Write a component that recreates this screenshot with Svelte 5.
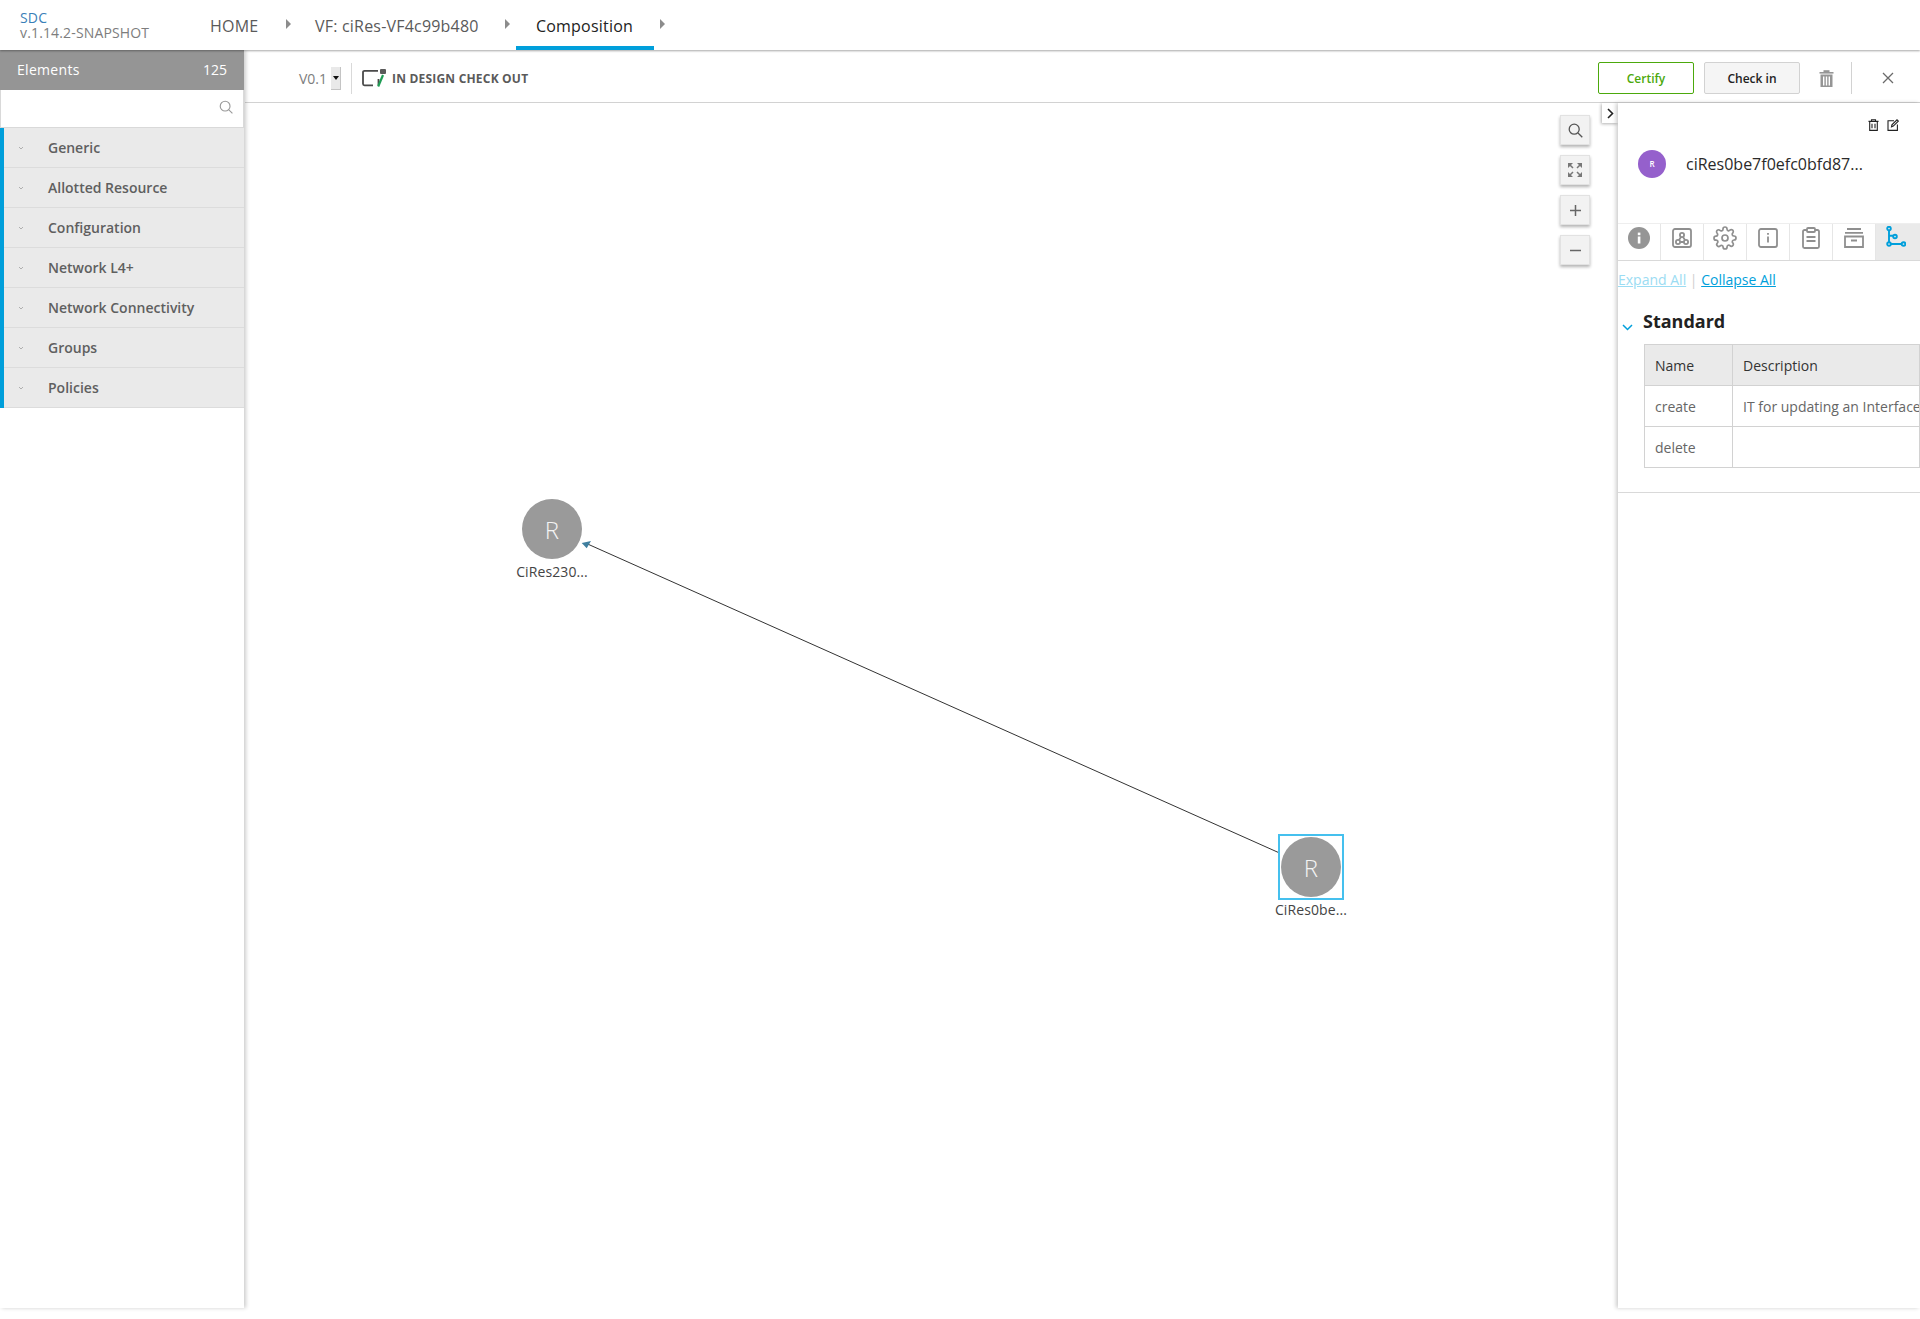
<script>
  const navItems = [
    { label: 'HOME' },
    { label: 'VF: ciRes-VF4c99b480' },
    { label: 'Composition', active: true }
  ];
  const groups = ['Generic', 'Allotted Resource', 'Configuration', 'Network L4+', 'Network Connectivity', 'Groups', 'Policies'];
  const nodes = [
    { id: 'a', label: 'CiRes230...', x: 522, y: 499 },
    { id: 'b', label: 'CiRes0be...', x: 1281, y: 837, selected: true }
  ];
</script>

<div class="page">
  <header class="topbar">
    <div class="brand">
      <div class="brand-name">SDC</div>
      <div class="brand-version">v.1.14.2-SNAPSHOT</div>
    </div>
    <nav class="nav">
      {#each navItems as item}
        <div class="nav-item" class:active={item.active}>
          <span>{item.label}</span>
          <i class="nav-arrow"></i>
        </div>
      {/each}
    </nav>
  </header>

  <div class="body">
    <aside class="sidebar">
      <div class="side-head"><span class="side-title">Elements</span><span>125</span></div>
      <div class="side-search">
        <svg width="14" height="14" viewBox="0 0 16 16" fill="none" stroke="#9a9a9a" stroke-width="1.3">
          <circle cx="7" cy="7" r="5.6"></circle>
          <path d="M11 11l4.300 4.300"></path>
        </svg>
      </div>
      <ul class="groups">
        {#each groups as g}
          <li>
            <svg width="6" height="4" viewBox="0 0 6 4" fill="none" stroke="#a0a0a0" stroke-width="0.8"><path d="M1 1l2 2 2-2"></path></svg>
            <span>{g}</span>
          </li>
        {/each}
      </ul>
    </aside>

    <main class="main">
      <div class="toolbar">
        <div class="version">
          <span>V0.1</span>
          <span class="version-select"><i></i></span>
        </div>
        <div class="status">
          <svg width="24" height="18" viewBox="0 0 24 18" fill="none">
            <path d="M16 1.800H2.500a1.500 1.500 0 0 0-1.500 1.500v11.500a1.500 1.500 0 0 0 1.500 1.500H11M16.500 10v6.300" stroke="#4a4a4a" stroke-width="1.800"></path>
            <rect x="18" y="0" width="6" height="5" rx="1" fill="#5a5a5a"></rect>
            <path d="M21 6l-4.800 11.500" stroke="#1f9d55" stroke-width="2.200"></path>
          </svg>
          <span>IN DESIGN CHECK OUT</span>
        </div>
        <div class="actions">
          <button class="btn certify">Certify</button>
          <button class="btn checkin">Check in</button>
          <svg class="trash" width="15" height="17" viewBox="0 0 15 17" fill="#959595">
            <rect x="0.5" y="2" width="14" height="1.6"></rect>
            <rect x="4.500" y="0.2" width="6" height="1.8"></rect>
            <path d="M1.500 4.600h12V17h-12zM4 6.500V15.500h1.400V6.500zM6.800 6.500V15.500h1.400V6.500zM9.600 6.500V15.500H11V6.500z" fill-rule="evenodd"></path>
          </svg>
          <span class="act-divider"></span>
          <svg class="close" width="12" height="12" viewBox="0 0 12 12" stroke="#6a6a6a" stroke-width="1.3"><path d="M1 1l10 10M11 1L1 11"></path></svg>
        </div>
      </div>

      <div class="work">
        <div class="canvas">
          <svg class="edges" width="1920" height="1319" viewBox="0 0 1920 1319">
            <line x1="1278" y1="852.300" x2="588" y2="544.200" stroke="#333" stroke-width="1"></line>
            <path d="M581.700 543L591 541L586.700 548.300z" fill="#3f7f9f"></path>
          </svg>
          {#each nodes as n}
            <div class="node" class:selected={n.selected} style="left:{n.x - 244}px;top:{n.y - 103}px">
              <div class="node-circle">R</div>
              <div class="node-label">{n.label}</div>
            </div>
          {/each}
          <div class="zoom-tools">
            <button aria-label="Search">
              <svg width="15" height="15" viewBox="0 0 15 15" fill="none" stroke="#555" stroke-width="1.300"><circle cx="6.200" cy="6.200" r="5"></circle><path d="M10 10l4.300 4.300"></path></svg>
            </button>
            <button aria-label="Fit">
              <svg width="14" height="14" viewBox="0 0 14 14" fill="#777" stroke="#777">
                <path stroke="none" d="M0 0h5L0 5zM14 0v5L9 0zM0 14V9l5 5zM14 14H9l5-5z"></path>
                <path stroke-width="1.500" d="M2 2l3 3M12 2L9 5M2 12l3-3M12 12L9 9"></path>
              </svg>
            </button>
            <button aria-label="Zoom in">
              <svg width="13" height="13" viewBox="0 0 13 13" stroke="#666" stroke-width="1.500"><path d="M1 6.500h11M6.500 1v11"></path></svg>
            </button>
            <button aria-label="Zoom out">
              <svg width="13" height="13" viewBox="0 0 13 13" stroke="#666" stroke-width="1.500"><path d="M1 6.500h11"></path></svg>
            </button>
          </div>
          <button class="panel-toggle" aria-label="Collapse panel">
            <svg width="7" height="11" viewBox="0 0 7 11" fill="none" stroke="#222" stroke-width="1.600"><path d="M1 1l4.500 4.500L1 10"></path></svg>
          </button>
        </div>

        <section class="panel">
          <div class="panel-tools">
            <svg width="11" height="12" viewBox="0 0 11 12" fill="none" stroke="#222" stroke-width="1.100">
              <path d="M0.500 2.400h10M3.500 2.200V.7h4v1.500M1.700 2.600v8.800h7.600V2.600M4 4.800v4.400M7 4.800v4.400"></path>
            </svg>
            <svg width="12" height="12" viewBox="0 0 12 12" fill="none" stroke="#222" stroke-width="1.100">
              <path d="M7 1.700H1v9.700h9.400V5.500M4.500 7.800l.4-2L10 .8l1.300 1.300-5 5z"></path>
            </svg>
          </div>
          <div class="panel-title">
            <span class="avatar">R</span>
            <span class="title-text">ciRes0be7f0efc0bfd87...</span>
          </div>
          <div class="tabs">
            <div class="tab">
              <svg width="22" height="22" viewBox="0 0 22 22"><circle cx="11" cy="11" r="11" fill="#959595"></circle><rect x="9.800" y="9.500" width="2.600" height="7" fill="#fff"></rect><rect x="9.800" y="5.600" width="2.600" height="2.600" fill="#fff"></rect></svg>
            </div>
            <div class="tab">
              <svg width="20" height="20" viewBox="0 0 20 20" fill="none" stroke="#8f8f8f" stroke-width="1.800">
                <rect x="1" y="1" width="18" height="18" rx="2"></rect>
                <circle cx="10" cy="7" r="2.100"></circle><circle cx="6" cy="14" r="2.100"></circle><circle cx="14" cy="14" r="2.100"></circle>
                <path d="M9 9l-2 3M11 9l2 3M8.200 14h3.600"></path>
              </svg>
            </div>
            <div class="tab">
              <svg width="24" height="24" viewBox="0 0 24 24" fill="none" stroke="#8f8f8f" stroke-width="1.700" stroke-linejoin="round">
                <circle cx="12" cy="12" r="3"></circle>
                <path d="M19.400 15a1.650 1.650 0 0 0 .33 1.820l.06.06a2 2 0 1 1-2.830 2.830l-.06-.06a1.650 1.650 0 0 0-2.820 1.170V21a2 2 0 1 1-4 0v-.09a1.650 1.650 0 0 0-2.820-1.120l-.06.06a2 2 0 1 1-2.830-2.830l.06-.06a1.650 1.650 0 0 0-1.170-2.820H3a2 2 0 1 1 0-4h.09a1.650 1.650 0 0 0 1.120-2.820l-.06-.06a2 2 0 1 1 2.830-2.830l.06.06a1.650 1.650 0 0 0 1.820.33H9a1.650 1.650 0 0 0 1-1.510V3a2 2 0 1 1 4 0v.09a1.650 1.650 0 0 0 2.820 1.170l.06-.06a2 2 0 1 1 2.830 2.830l-.06.06a1.650 1.650 0 0 0-.33 1.820V9a1.650 1.650 0 0 0 1.510 1H21a2 2 0 1 1 0 4h-.09a1.650 1.650 0 0 0-1.510 1z"></path>
              </svg>
            </div>
            <div class="tab">
              <svg width="20" height="20" viewBox="0 0 20 20" fill="none" stroke="#8f8f8f" stroke-width="1.800">
                <rect x="1" y="1" width="18" height="18" rx="2"></rect>
                <path d="M10 8.500v6M10 5v1.800"></path>
              </svg>
            </div>
            <div class="tab">
              <svg width="18" height="22" viewBox="0 0 18 22" fill="none" stroke="#8f8f8f" stroke-width="1.800">
                <path d="M5 3H2.500A1.500 1.500 0 0 0 1 4.500v15A1.500 1.500 0 0 0 2.500 21h13a1.500 1.500 0 0 0 1.500-1.500v-15A1.500 1.500 0 0 0 15.500 3H13"></path>
                <rect x="5" y="1" width="8" height="4" rx="1"></rect>
                <path d="M4.500 10h9M4.500 14h9"></path>
              </svg>
            </div>
            <div class="tab">
              <svg width="20" height="20" viewBox="0 0 20 20" fill="none" stroke="#8f8f8f" stroke-width="1.800">
                <path d="M3 1h14M1 4.800h18M1 8.500h18v10.500H1zM7 12.500h6"></path>
              </svg>
            </div>
            <div class="tab active">
              <svg width="20" height="22" viewBox="0 0 20 22" fill="none" stroke="#009fdb" stroke-width="1.900">
                <circle cx="3" cy="2.500" r="1.800"></circle><circle cx="3" cy="18" r="1.800"></circle><circle cx="9" cy="10.500" r="1.800"></circle><circle cx="17.500" cy="18" r="1.800"></circle>
                <path d="M3 4.500v11.600M5 18h10.500M3.200 9.800h3.800"></path>
              </svg>
            </div>
          </div>
          <div class="expanders">
            <a class="faded" href="#expand">Expand All </a>
            <span class="sep">|</span>
            <a href="#collapse">Collapse All</a>
          </div>
          <div class="section">
            <div class="section-head">
              <svg width="11" height="7" viewBox="0 0 11 7" fill="none" stroke="#009fdb" stroke-width="1.500"><path d="M1 1l4.500 4.500L10 1"></path></svg>
              <h3>Standard</h3>
            </div>
            <div class="table-wrap">
              <table>
                <thead><tr><th class="c-name">Name</th><th>Description</th></tr></thead>
                <tbody>
                  <tr><td class="c-name">create</td><td>IT for updating an Interface</td></tr>
                  <tr><td class="c-name">delete</td><td></td></tr>
                </tbody>
              </table>
            </div>
          </div>
        </section>
      </div>
    </main>
  </div>
</div>

<style>
  :global(body) {
    margin: 0;
    background: #fff;
    font-family: "Open Sans", sans-serif;
    overflow: hidden;
  }

  .page {
    width: 1920px;
    height: 1319px;
    display: flex;
    flex-direction: column;
    overflow: hidden;
  }

  .topbar {
    height: 50px;
    flex: none;
    display: flex;
    box-shadow: 0 1px 2px rgba(0, 0, 0, 0.35);
    position: relative;
    z-index: 3;
    background: #fff;
  }

  .brand {
    width: 210px;
    flex: none;
    box-sizing: border-box;
    padding: 10px 0 0 20px;
    font-size: 14px;
    line-height: 15px;
    letter-spacing: 0.15px;
  }

  .brand-name {
    color: #3a7fb8;
  }

  .brand-version {
    color: #7d7d7d;
  }

  .nav {
    display: flex;
  }

  .nav-item {
    position: relative;
    display: flex;
    align-items: center;
    height: 50px;
    box-sizing: border-box;
    padding-top: 2px;
    font-size: 16px;
    letter-spacing: 0.2px;
    color: #5a5a5a;
  }

  .nav-item:nth-child(1) {
    width: 105px;
  }

  .nav-item:nth-child(2) {
    width: 201px;
  }

  .nav-item.active {
    width: 138px;
    padding: 6px 20px 0;
    border-bottom: 4px solid #009fdb;
    color: #222;
  }

  .nav-arrow {
    position: absolute;
    top: 19px;
    width: 0;
    height: 0;
    border-left: 5px solid #8c8c8c;
    border-top: 5px solid transparent;
    border-bottom: 5px solid transparent;
  }

  .nav-item:nth-child(1) .nav-arrow {
    left: 76px;
  }

  .nav-item:nth-child(2) .nav-arrow {
    left: 190px;
  }

  .nav-item:nth-child(3) .nav-arrow {
    left: 144px;
  }

  .body {
    flex: 1;
    display: flex;
    min-height: 0;
    padding-bottom: 11px;
  }

  .sidebar {
    width: 244px;
    flex: none;
    background: #fff;
    box-shadow: 2px 0 4px rgba(0, 0, 0, 0.2);
    position: relative;
    z-index: 2;
  }

  .side-head {
    height: 40px;
    background: #959595;
    color: #fff;
    display: flex;
    justify-content: space-between;
    align-items: center;
    box-sizing: border-box;
    padding: 0 17px 2px;
    font-size: 14px;
  }

  .side-title {
    letter-spacing: 0.3px;
  }

  .side-search {
    height: 38px;
    box-sizing: border-box;
    border: 1px solid #d9d9d9;
    border-top: none;
    display: flex;
    align-items: center;
    justify-content: flex-end;
    padding: 0 10px 4px 0;
  }

  .groups {
    list-style: none;
    margin: 0;
    padding: 0;
    border-left: 4px solid #009fdb;
  }

  .groups li {
    height: 40px;
    box-sizing: border-box;
    background: #eaeaea;
    border-bottom: 1px solid #dcdcdc;
    display: flex;
    align-items: center;
    font-size: 14px;
    font-weight: 600;
    color: #5f5f5f;
  }

  .groups li svg {
    margin: 0 0 0 14px;
  }

  .groups li span {
    margin-left: 24px;
  }

  .main {
    flex: 1;
    min-width: 0;
    display: flex;
    flex-direction: column;
  }

  .toolbar {
    height: 53px;
    flex: none;
    display: flex;
    align-items: center;
    box-sizing: border-box;
    border-bottom: 1px solid #d2d2d2;
    padding: 4px 0 0 54px;
    margin-left: 1px;
    background: #fff;
  }

  .version {
    display: flex;
    align-items: center;
    gap: 4px;
    font-size: 14px;
    color: #7d7d7d;
    height: 31px;
    padding-right: 10px;
    border-right: 1px solid #d9d9d9;
  }

  .version-select {
    width: 9px;
    height: 22px;
    background: #e9e9e9;
    border: 1px solid #c4c4c4;
    border-width: 0 1px 1px 0;
    display: flex;
    align-items: center;
    justify-content: center;
  }

  .version-select i {
    width: 0;
    height: 0;
    border-top: 4px solid #111;
    border-left: 3px solid transparent;
    border-right: 3px solid transparent;
  }

  .status {
    display: flex;
    align-items: center;
    gap: 6px;
    margin-left: 10px;
    font-size: 12px;
    font-weight: 700;
    letter-spacing: 0.2px;
    color: #5a5a5a;
  }

  .actions {
    margin-left: auto;
    display: flex;
    align-items: center;
  }

  .btn {
    width: 96px;
    height: 32px;
    box-sizing: border-box;
    font-family: inherit;
    font-size: 12px;
    font-weight: 600;
    border-radius: 2px;
    padding: 0;
    margin-right: 10px;
  }

  .certify {
    background: #fff;
    border: 1px solid #4ca90c;
    color: #4ca90c;
  }

  .checkin {
    background: #f5f5f5;
    border: 1px solid #d2d2d2;
    color: #222;
    margin-right: 0;
  }

  .trash {
    margin-left: 19px;
  }

  .act-divider {
    width: 1px;
    height: 32px;
    background: #d2d2d2;
    margin: 0 30px 0 17px;
  }

  .close {
    margin-right: 26px;
  }

  .work {
    flex: 1;
    min-height: 0;
    display: flex;
  }

  .canvas {
    flex: 1;
    position: relative;
    min-width: 0;
  }

  .edges {
    position: absolute;
    left: -244px;
    top: -103px;
    pointer-events: none;
  }

  .node {
    position: absolute;
    width: 60px;
    height: 60px;
  }

  .node.selected::before {
    content: "";
    position: absolute;
    inset: -3px;
    border: 2px solid #45c0ee;
  }

  .node-circle {
    width: 60px;
    height: 60px;
    border-radius: 50%;
    background: #9a9a9a;
    color: #f4f4f4;
    display: flex;
    align-items: center;
    justify-content: center;
    font-size: 24px;
    font-weight: 300;
  }

  .node-label {
    position: absolute;
    top: 63px;
    left: -20px;
    width: 100px;
    text-align: center;
    font-size: 14px;
    line-height: 20px;
    letter-spacing: 0.1px;
    color: #444;
  }

  .zoom-tools {
    position: absolute;
    top: 12px;
    right: 28px;
    display: flex;
    flex-direction: column;
    gap: 10px;
  }

  .zoom-tools button {
    width: 30px;
    height: 30px;
    padding: 0;
    box-sizing: border-box;
    background: #f2f2f2;
    border: 1px solid #e2e2e2;
    box-shadow: 0 2px 3px rgba(0, 0, 0, 0.3);
    display: flex;
    align-items: center;
    justify-content: center;
  }

  .panel-toggle {
    position: absolute;
    top: 0;
    right: 0;
    width: 16px;
    height: 20px;
    padding: 0;
    border: none;
    background: #fff;
    box-shadow: -1px 1px 3px rgba(0, 0, 0, 0.3);
    display: flex;
    align-items: center;
    justify-content: center;
  }

  .panel {
    width: 302px;
    flex: none;
    box-sizing: border-box;
    background: #fff;
    box-shadow: -2px 0 4px rgba(0, 0, 0, 0.2);
    position: relative;
    overflow: hidden;
  }

  .panel-tools {
    display: flex;
    justify-content: flex-end;
    gap: 8px;
    padding: 16px 21px 0 0;
    height: 12px;
  }

  .panel-title {
    display: flex;
    align-items: center;
    padding-left: 20px;
    margin-top: 9px;
    height: 47px;
  }

  .avatar {
    width: 28px;
    height: 28px;
    border-radius: 50%;
    background: #9560cc;
    color: #fff;
    font-size: 8px;
    font-weight: 600;
    display: flex;
    align-items: center;
    justify-content: center;
    flex: none;
  }

  .title-text {
    margin-left: 20px;
    font-size: 16px;
    color: #2a2a2a;
  }

  .tabs {
    display: flex;
    margin-top: 36px;
    height: 36px;
    border-bottom: 1px solid #d9d9d9;
    border-top: 1px solid #eee;
  }

  .tab {
    width: 43px;
    box-sizing: border-box;
    border-right: 1px solid #e6e6e6;
    display: flex;
    justify-content: center;
    align-items: center;
    padding-bottom: 9px;
  }

  .tab.active {
    flex: 1;
    border-right: none;
    background: #eaeaea;
    padding: 0 5px 10px 0;
  }

  .expanders {
    font-size: 14px;
    margin-top: 9px;
    line-height: 20px;
    color: #cfcfcf;
    white-space: pre;
  }

  .expanders a {
    color: #009fdb;
  }

  .expanders a.faded {
    color: #9bdcf3;
  }

  .section {
    border-bottom: 1px solid #d9d9d9;
    padding-bottom: 24px;
    margin-top: 19px;
  }

  .section-head {
    display: flex;
    align-items: center;
    height: 24px;
  }

  .section-head svg {
    margin: 12px 0 0 4px;
    flex: none;
  }

  .section-head h3 {
    margin: 0 0 0 10px;
    font-size: 18px;
    font-weight: 700;
    color: #222;
    line-height: 24px;
  }

  .table-wrap {
    margin: 11px 0 0 26px;
    overflow: hidden;
  }

  table {
    border-collapse: collapse;
    table-layout: fixed;
    width: 276px;
    font-size: 14px;
  }

  th, td {
    border: 1px solid #d2d2d2;
    height: 41px;
    box-sizing: border-box;
    padding: 0 0 0 10px;
    text-align: left;
    white-space: nowrap;
    overflow: hidden;
  }

  th {
    background: #eaeaea;
    color: #333;
    font-weight: 400;
  }

  td {
    color: #666;
  }

  .c-name {
    width: 88px;
  }
</style>
